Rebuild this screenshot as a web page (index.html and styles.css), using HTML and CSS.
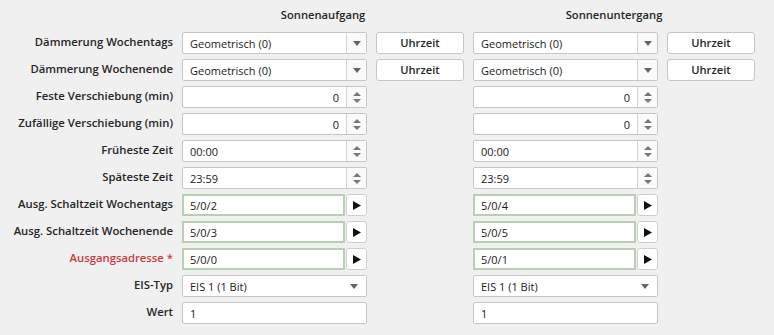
FILE: index.html
```html
<!DOCTYPE html>
<html>
<head>
  <title>Astro-Zeitschaltuhr</title>
  <link rel="stylesheet" href="styles.css">
</head>
<body>
  <div class="form">
    <div></div>
    <div class="head span2">Sonnenaufgang</div>
    <div class="head span2">Sonnenuntergang</div>

    <div class="label">Dämmerung Wochentags</div>
    <div class="combo"><span class="val">Geometrisch (0)</span><span class="drop"><svg width="8" height="5"><polygon points="0,0 8,0 4,5" /></svg></span></div>
    <div class="btn">Uhrzeit</div>
    <div class="combo"><span class="val">Geometrisch (0)</span><span class="drop"><svg width="8" height="5"><polygon points="0,0 8,0 4,5" /></svg></span></div>
    <div class="btn">Uhrzeit</div>

    <div class="label">Dämmerung Wochenende</div>
    <div class="combo"><span class="val">Geometrisch (0)</span><span class="drop"><svg width="8" height="5"><polygon points="0,0 8,0 4,5" /></svg></span></div>
    <div class="btn">Uhrzeit</div>
    <div class="combo"><span class="val">Geometrisch (0)</span><span class="drop"><svg width="8" height="5"><polygon points="0,0 8,0 4,5" /></svg></span></div>
    <div class="btn">Uhrzeit</div>

    <div class="label">Feste Verschiebung (min)</div>
    <div class="spin"><span class="val num">0</span><span class="arrows"><svg width="8" height="11"><polygon points="0,4 8,4 4,0" /><polygon points="0,7 8,7 4,11" /></svg></span></div>
    <div></div>
    <div class="spin"><span class="val num">0</span><span class="arrows"><svg width="8" height="11"><polygon points="0,4 8,4 4,0" /><polygon points="0,7 8,7 4,11" /></svg></span></div>
    <div></div>

    <div class="label">Zufällige Verschiebung (min)</div>
    <div class="spin"><span class="val num">0</span><span class="arrows"><svg width="8" height="11"><polygon points="0,4 8,4 4,0" /><polygon points="0,7 8,7 4,11" /></svg></span></div>
    <div></div>
    <div class="spin"><span class="val num">0</span><span class="arrows"><svg width="8" height="11"><polygon points="0,4 8,4 4,0" /><polygon points="0,7 8,7 4,11" /></svg></span></div>
    <div></div>

    <div class="label">Früheste Zeit</div>
    <div class="spin"><span class="val">00:00</span><span class="arrows"><svg width="8" height="11"><polygon points="0,4 8,4 4,0" /><polygon points="0,7 8,7 4,11" /></svg></span></div>
    <div></div>
    <div class="spin"><span class="val">00:00</span><span class="arrows"><svg width="8" height="11"><polygon points="0,4 8,4 4,0" /><polygon points="0,7 8,7 4,11" /></svg></span></div>
    <div></div>

    <div class="label">Späteste Zeit</div>
    <div class="spin"><span class="val">23:59</span><span class="arrows"><svg width="8" height="11"><polygon points="0,4 8,4 4,0" /><polygon points="0,7 8,7 4,11" /></svg></span></div>
    <div></div>
    <div class="spin"><span class="val">23:59</span><span class="arrows"><svg width="8" height="11"><polygon points="0,4 8,4 4,0" /><polygon points="0,7 8,7 4,11" /></svg></span></div>
    <div></div>

    <div class="label">Ausg. Schaltzeit Wochentags</div>
    <div class="addr"><span class="ga">5/0/2</span><span class="go"><svg width="8" height="9"><polygon points="0,0 8,4.5 0,9" /></svg></span></div>
    <div></div>
    <div class="addr"><span class="ga">5/0/4</span><span class="go"><svg width="8" height="9"><polygon points="0,0 8,4.5 0,9" /></svg></span></div>
    <div></div>

    <div class="label">Ausg. Schaltzeit Wochenende</div>
    <div class="addr"><span class="ga">5/0/3</span><span class="go"><svg width="8" height="9"><polygon points="0,0 8,4.5 0,9" /></svg></span></div>
    <div></div>
    <div class="addr"><span class="ga">5/0/5</span><span class="go"><svg width="8" height="9"><polygon points="0,0 8,4.5 0,9" /></svg></span></div>
    <div></div>

    <div class="label required">Ausgangsadresse *</div>
    <div class="addr"><span class="ga">5/0/0</span><span class="go"><svg width="8" height="9"><polygon points="0,0 8,4.5 0,9" /></svg></span></div>
    <div></div>
    <div class="addr"><span class="ga">5/0/1</span><span class="go"><svg width="8" height="9"><polygon points="0,0 8,4.5 0,9" /></svg></span></div>
    <div></div>

    <div class="label">EIS-Typ</div>
    <div class="combo plain"><span class="val">EIS 1 (1 Bit)</span><span class="drop"><svg width="8" height="5"><polygon points="0,0 8,0 4,5" /></svg></span></div>
    <div></div>
    <div class="combo plain"><span class="val">EIS 1 (1 Bit)</span><span class="drop"><svg width="8" height="5"><polygon points="0,0 8,0 4,5" /></svg></span></div>
    <div></div>

    <div class="label">Wert</div>
    <div class="text">1</div>
    <div></div>
    <div class="text">1</div>
    <div></div>
  </div>
</body>
</html>
```

FILE: styles.css
```css
body {
  margin: 0;
  background-color: #f0f0f0;
  font-family: "Open Sans", "Noto Sans", sans-serif;
  font-size: 11px;
  color: #1a1a1a;
}

.form {
  display: grid;
  grid-template-columns: 165px 185px 88px 185px 88px;
  grid-auto-rows: 22px;
  column-gap: 9px;
  row-gap: 5px;
  padding: 5px 0 0 8px;
}

.head {
  height: 24px;
  line-height: 20px;
  text-align: center;
  font-size: 11.2px;
  font-weight: 600;
  color: #262626;
}

.span2 {
  grid-column: span 2;
}

.label {
  text-align: right;
  line-height: 20px;
  font-size: 11.3px;
  font-weight: 600;
  color: #262626;
  white-space: nowrap;
}

.required {
  color: #cc3b3b;
}

.combo,
.spin,
.text,
.btn {
  box-sizing: border-box;
  height: 22px;
  background-color: #fff;
  border: 1px solid #c6c6c6;
  border-radius: 2px;
}

.combo,
.spin {
  display: flex;
}

.val {
  flex: 1;
  padding: 0 7px;
  line-height: 21px;
}

.num {
  text-align: right;
}

.drop,
.arrows {
  width: 19px;
  display: flex;
  align-items: center;
  justify-content: center;
  border-left: 1px solid #d4d4d4;
  background-color: #fafafa;
}

.drop svg {
  fill: #666;
}

.arrows svg {
  fill: #777;
}

.plain .drop {
  border-left: none;
  background-color: #fff;
  width: 24px;
}

.text {
  padding: 0 7px;
  line-height: 21px;
}

.btn {
  text-align: center;
  line-height: 20px;
  font-size: 11.2px;
  font-weight: 600;
  border-radius: 3px;
  color: #262626;
}

.addr {
  display: flex;
  gap: 1px;
}

.ga {
  flex: 1;
  box-sizing: border-box;
  height: 22px;
  padding: 0 6px;
  line-height: 19px;
  background-color: #fff;
  border: 2px solid #b8cfb2;
}

.go {
  box-sizing: border-box;
  width: 21px;
  height: 22px;
  display: flex;
  align-items: center;
  justify-content: center;
  background-color: #fff;
  border: 1px solid #cfcfcf;
  border-radius: 3px;
}

.go svg {
  fill: #111;
}
```
